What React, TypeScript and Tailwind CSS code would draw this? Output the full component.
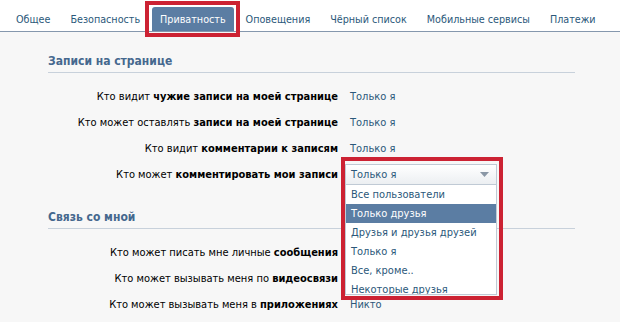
import React from "react";

const tabs = [
  { label: "Общее" },
  { label: "Безопасность" },
  { label: "Приватность", active: true },
  { label: "Оповещения" },
  { label: "Чёрный список" },
  { label: "Мобильные сервисы" },
  { label: "Платежи" },
];

const options = [
  "Все пользователи",
  "Только друзья",
  "Друзья и друзья друзей",
  "Только я",
  "Все, кроме..",
  "Некоторые друзья",
];

function Row({ label, bold, value }: { label: string; bold: string; value?: React.ReactNode }) {
  return (
    <div className="flex h-[26px] items-center">
      <div className="w-[290px] shrink-0 text-right text-black">
        {label} <b className="font-bold">{bold}</b>
      </div>
      <div className="ml-[12px] text-[#2b587a]">{value}</div>
    </div>
  );
}

function Select() {
  return (
    <div className="relative -ml-[5px] w-[152px]">
      <div className="flex h-[21px] items-center justify-between border border-[#c0cad5] bg-linear-to-b from-white to-[#eceff2] pl-[5px] pr-[7px] text-[#2b587a]">
        <span>Только я</span>
        <svg width="9" height="5" viewBox="0 0 9 5">
          <path d="M0 0H9L4.5 5Z" fill="#8a97a6" />
        </svg>
      </div>
      <div className="absolute left-0 top-full z-10 h-[110px] w-full overflow-hidden border border-t-0 border-[#c0cad5] bg-white">
        {options.map((o, i) => (
          <div
            key={o}
            className={
              i === 1
                ? "flex h-[19px] items-center bg-[#5b7da3] pl-[5px] text-white"
                : "flex h-[19px] items-center pl-[5px] text-[#2b587a]"
            }
          >
            {o}
          </div>
        ))}
      </div>
      <div className="pointer-events-none absolute left-[-4px] top-[-7px] z-20 h-[143px] w-[162px] border-[4px] border-[#cc2233]" />
    </div>
  );
}

function Section({ title, children, top }: { title: string; children: React.ReactNode; top: string }) {
  return (
    <div className={top}>
      <div className="flex h-[21px] items-end border-b border-[#c8d1db] pb-[2px] text-[12px] font-bold leading-[18px] text-[#45688e]">
        {title}
      </div>
      <div className="mt-[10px]">{children}</div>
    </div>
  );
}

export default function App() {
  return (
    <div className="h-[322px] w-[620px] overflow-hidden bg-[#f7f7f7] font-['DejaVu_Sans_Condensed','DejaVu_Sans',sans-serif] text-[11px] leading-[13px]">
      <div className="flex h-[32px] items-end gap-[4px] border-b border-[#8597ad] bg-white pl-2 text-[10.7px]">
        {tabs.map((t) =>
          t.active ? (
            <div
              key={t.label}
              className="relative flex h-[24px] items-center rounded-t-[3px] bg-[#5b7da3] px-2 text-white"
            >
              {t.label}
              <div className="pointer-events-none absolute bottom-[-6px] left-[-7px] right-[-6px] top-[-6px] z-20 border-[4px] border-[#cc2233]" />
            </div>
          ) : (
            <div key={t.label} className="flex h-[24px] items-center px-2 text-[#2b587a]">
              {t.label}
            </div>
          )
        )}
      </div>
      <div className="ml-[48px] w-[527px]">
        <Section title="Записи на странице" top="pt-[20px]">
          <Row label="Кто видит" bold="чужие записи на моей странице" value="Только я" />
          <Row label="Кто может оставлять" bold="записи на моей странице" value="Только я" />
          <Row label="Кто видит" bold="комментарии к записям" value="Только я" />
          <Row label="Кто может" bold="комментировать мои записи" value={<Select />} />
        </Section>
        <Section title="Связь со мной" top="pt-[21px]">
          <Row label="Кто может писать мне личные" bold="сообщения" />
          <Row label="Кто может вызывать меня по" bold="видеосвязи" />
          <Row label="Кто может вызывать меня в" bold="приложениях" value="Никто" />
        </Section>
      </div>
    </div>
  );
}
